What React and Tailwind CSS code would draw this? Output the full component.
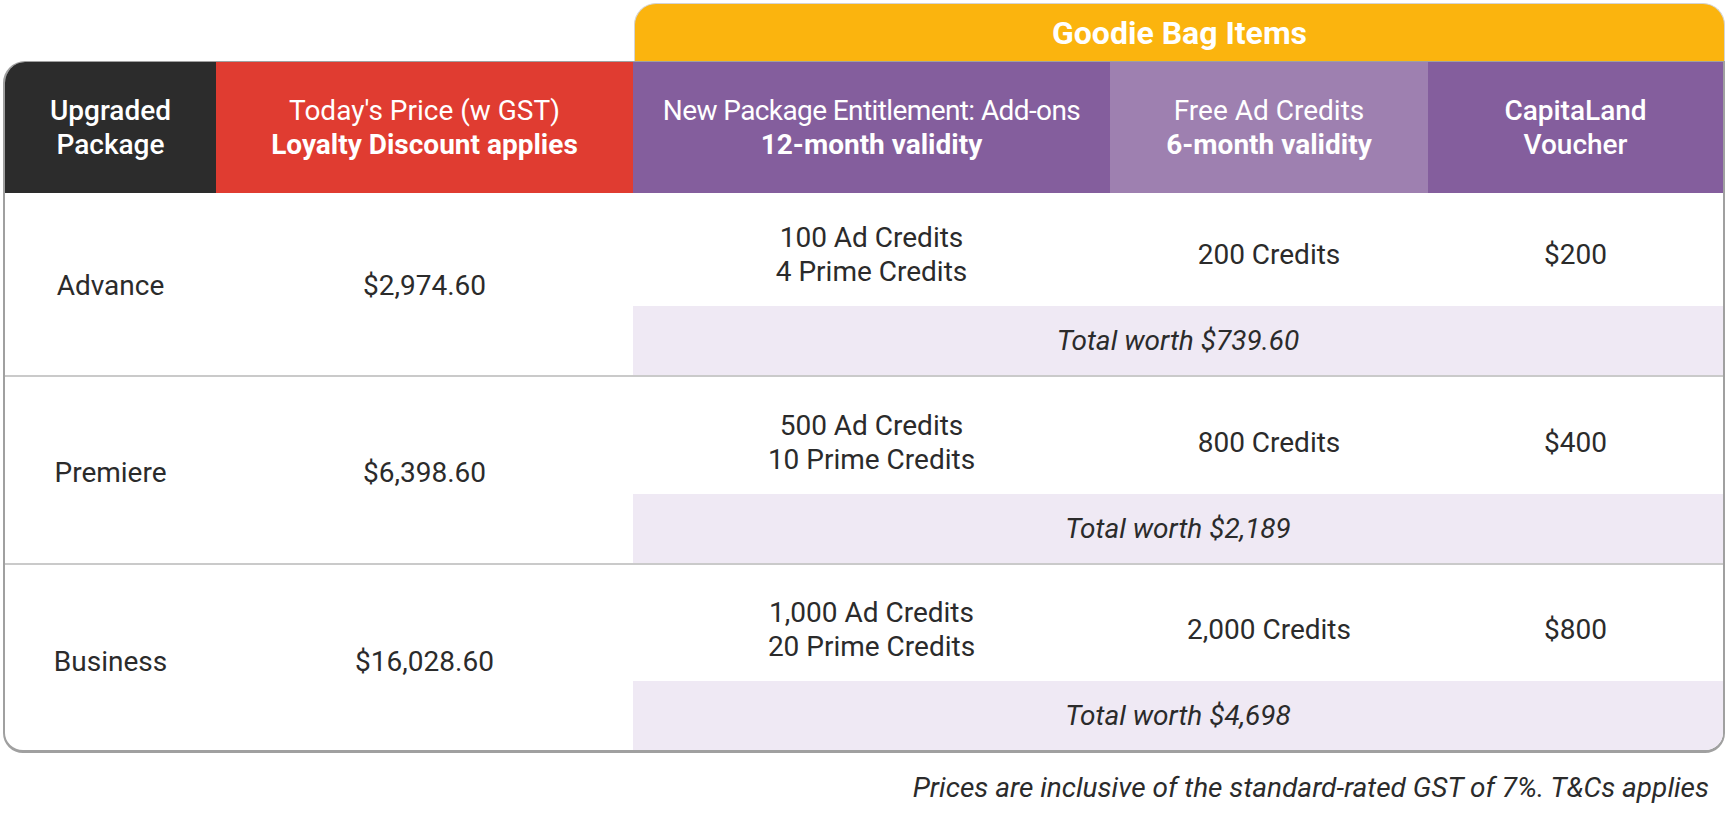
import React from "react";

const rows = [
  { name: "Advance", price: "$2,974.60", add: ["100 Ad Credits", "4 Prime Credits"], free: "200 Credits", voucher: "$200", total: "Total worth $739.60", main: "h-[113px] pt-[10px]", tot: "h-[69px]", side: "pt-[4px]" },
  { name: "Premiere", price: "$6,398.60", add: ["500 Ad Credits", "10 Prime Credits"], free: "800 Credits", voucher: "$400", total: "Total worth $2,189", main: "h-[117px] pt-[15px]", tot: "h-[69px]", side: "pt-[6px]" },
  { name: "Business", price: "$16,028.60", add: ["1,000 Ad Credits", "20 Prime Credits"], free: "2,000 Credits", voucher: "$800", total: "Total worth $4,698", main: "h-[116px] pt-[14px]", tot: "h-[69px]", side: "pt-[8px]" },
];

export default function App() {
  return (
    <div
      className="w-[1731px] h-[815px] bg-white pt-[3px] overflow-hidden"
      style={{ fontFamily: "Roboto, 'Noto Sans', sans-serif" }}
    >
      <div className="ml-[3px] w-[1722px]">
        {/* Goodie Bag band */}
        <div className="ml-[631px] h-[58px] rounded-t-[22px] bg-[#fbb40e] border border-b-0 border-[#d4d4d4] flex items-center justify-center">
          <span className="text-white font-bold text-[32px] leading-none">Goodie Bag Items</span>
        </div>

        {/* Table */}
        <div className="border-x-2 border-t border-b-[3px] border-[#a0a0a0] rounded-tl-[22px] rounded-b-[20px] overflow-hidden">
          {/* Header */}
          <div className="flex h-[131px] text-white text-[28px] leading-[34px] text-center">
            <div className="w-[211px] bg-[#2c2c2c] flex flex-col items-center justify-center font-medium">
              <span>Upgraded</span>
              <span>Package</span>
            </div>
            <div className="w-[417px] bg-[#e03c31] flex flex-col items-center justify-center">
              <span className="font-normal">Today's Price (w GST)</span>
              <span className="font-bold">Loyalty Discount applies</span>
            </div>
            <div className="w-[477px] bg-[#845e9d] flex flex-col items-center justify-center">
              <span className="font-normal tracking-[-0.6px]">New Package Entitlement: Add-ons</span>
              <span className="font-bold">12-month validity</span>
            </div>
            <div className="w-[318px] bg-[#9e80b0] flex flex-col items-center justify-center">
              <span className="font-normal">Free Ad Credits</span>
              <span className="font-bold">6-month validity</span>
            </div>
            <div className="w-[295px] bg-[#845e9d] flex flex-col items-center justify-center font-medium">
              <span>CapitaLand</span>
              <span>Voucher</span>
            </div>
          </div>

          {/* Body rows */}
          {rows.map((r, i) => (
            <div
              key={r.name}
              className={`flex text-[28px] leading-[34px] text-[#2b2b2b] text-center ${i < rows.length - 1 ? "border-b-2 border-[#cacaca]" : ""}`}
            >
              <div className={`w-[211px] flex items-center justify-center ${r.side}`}>{r.name}</div>
              <div className={`w-[417px] flex items-center justify-center ${r.side}`}>{r.price}</div>
              <div className="w-[1090px] flex flex-col">
                <div className={`flex ${r.main}`}>
                  <div className="w-[477px] flex flex-col items-center justify-center">
                    <span>{r.add[0]}</span>
                    <span>{r.add[1]}</span>
                  </div>
                  <div className="w-[318px] flex items-center justify-center">{r.free}</div>
                  <div className="w-[295px] flex items-center justify-center">{r.voucher}</div>
                </div>
                <div className={`${r.tot} bg-[#efe9f4] flex items-center justify-center italic`}>
                  {r.total}
                </div>
              </div>
            </div>
          ))}
        </div>
      </div>

      <div className="mt-[19px] pr-[22px] text-right italic text-[28px] leading-[32px] text-[#2b2b2b]">
        Prices are inclusive of the standard-rated GST of 7%. T&amp;Cs applies
      </div>
    </div>
  );
}
